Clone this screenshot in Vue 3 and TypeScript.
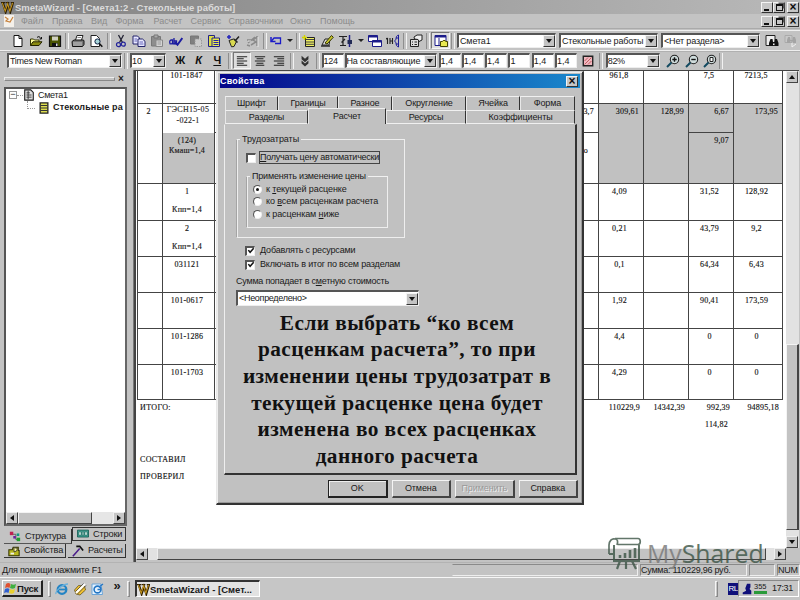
<script setup lang="ts">
interface Tool { icon?: string; w: number; kind?: 'sep' | 'caret' | 'pressed' }
interface Cell { t?: string }

const menu = [
  ['Файл', 31], ['Правка', 39], ['Вид', 24.5], ['Форма', 38], ['Расчет', 37], ['Сервис', 38], ['Справочники', 61.5], ['Окно', 30], ['Помощь', 40],
] as [string, number][]

const tools: Tool[] = [
  { icon: 'new', w: 18.5 }, { icon: 'open', w: 18.5 }, { icon: 'save', w: 18.5 }, { w: 5, kind: 'sep' },
  { icon: 'print', w: 18 }, { icon: 'preview', w: 18 }, { w: 7, kind: 'sep' },
  { icon: 'cut', w: 18 }, { icon: 'copy', w: 18 }, { icon: 'paste', w: 18 }, { icon: 'spell', w: 20 },
  { icon: 'pastegray', w: 19 }, { icon: 'fields', w: 18 }, { icon: 'brush', w: 19 }, { icon: 'branch', w: 20 },
  { w: 5, kind: 'sep' }, { icon: 'undo', w: 17 }, { w: 11, kind: 'caret' }, { w: 5, kind: 'sep' },
  { icon: 'list', w: 18 }, { icon: 'pencil', w: 18 }, { icon: 'compass', w: 19 }, { w: 11, kind: 'caret' },
  { icon: 'windows', w: 18 }, { icon: 'split', w: 18 }, { w: 5, kind: 'sep' }, { icon: 'hand', w: 18 },
  { w: 6, kind: 'sep' }, { icon: 'tree', w: 19, kind: 'pressed' }, { w: 5, kind: 'sep' },
]
const coefs = ['1,4', '1,4', '1,4', '1', '1,4', '1,4']

const rows: Cell[][] = [
  [{}, { t: '101-1847' }, {}, { t: '961,8' }, {}, { t: '7,5' }, { t: '7213,5' }],
]
const bodyRows: string[][] = [
  ['1', 'Кпп=1,4', '4,09', '31,52', '128,92'],
  ['2', 'Кпп=1,4', '0,21', '43,79', '9,2'],
  ['031121', '', '0,1', '64,34', '6,43'],
  ['101-0617', '', '1,92', '90,41', '173,59'],
  ['101-1286', '', '4,4', '0', '0'],
  ['101-1703', '', '4,29', '0', '0'],
]
const tabsTop: [string, number][] = [['Шрифт', 53], ['Границы', 60], ['Разное', 54], ['Округление', 74], ['Ячейка', 54], ['Форма', 55]]
const tabsLow: [string, number][] = [['Разделы', 83], ['Расчет', 78], ['Ресурсы', 80], ['Коэффициенты', 109]]
const radios: [string, string, string][] = [['к ', 'т', 'екущей расценке'], ['ко ', 'в', 'сем расценкам расчета'], ['к расценкам ', 'н', 'иже']]
const note = ['Если выбрать “ко всем', 'расценкам расчета”, то при', 'изменении цены трудозатрат в', 'текущей расценке цена будет', 'изменена во всех расценках', 'данного расчета']
</script>

<template>
  <div class="screen">
    <svg class="defs" width="0" height="0">
      <symbol id="i-new" viewBox="0 0 14 14"><path d="M3 1.5h5l3 3v8H3z" fill="#fff" stroke="#111" /><path d="M8 1.5v3h3" fill="none" stroke="#111" /></symbol>
      <symbol id="i-open" viewBox="0 0 14 14"><path d="M1.5 11.5V5h3l1 1H10v2" fill="#ffff9c" stroke="#333300" /><path d="M1.5 11.5L4 7.8h9L10 11.5z" fill="#8a8a10" stroke="#222200" /><path d="M8 3.5c1.500-1.500 3-1 3.500 1M12.500 3v2h-2" fill="none" stroke="#111" /></symbol>
      <symbol id="i-save" viewBox="0 0 14 14"><path d="M1.500 2h11v10.500h-11z" fill="#4a5400" stroke="#111" stroke-width="1.200" /><path d="M4 2.500h6v4H4z" fill="#d0d0c0" /><path d="M4 9h6v3H4z" fill="#111" /><path d="M8 9.500h1.500V12H8z" fill="#ddd" /></symbol>
      <symbol id="i-print" viewBox="0 0 14 14"><path d="M4.500 6L6 1.500h6L10.500 6" fill="#fff" stroke="#222" /><path d="M6.500 3.500h3.500" stroke="#555" stroke-width=".7" /><path d="M1 7.500L3 6h9.500L13 7v3.500L11.500 12.500H1.500z" fill="#777" stroke="#111" /><path d="M2 9h9M2 11h9" stroke="#ddd" stroke-width=".8" /></symbol>
      <symbol id="i-preview" viewBox="0 0 14 14"><path d="M2 1.500h5.500l3 3v8H2z" fill="#fff" stroke="#222" /><circle cx="8.500" cy="7.500" r="2.600" fill="#a7d4d8" stroke="#124" /><path d="M10.300 9.500L13.300 12.800" stroke="#111" stroke-width="1.600" /></symbol>
      <symbol id="i-cut" viewBox="0 0 14 14"><path d="M4.500 1L8.500 8.500M9.500 1L5.500 8.500" stroke="#223" stroke-width="1.300" /><circle cx="4.500" cy="10.700" r="2" fill="none" stroke="#22229a" stroke-width="1.200" /><circle cx="9.300" cy="10.200" r="2" fill="none" stroke="#22229a" stroke-width="1.200" /></symbol>
      <symbol id="i-copy" viewBox="0 0 14 14"><path d="M1 2h4.500L7.500 4v6H1z" fill="#e8e8ff" stroke="#22226a" /><path d="M6 5h4.500L13 7.300v5.200H6z" fill="#e8e8ff" stroke="#22226a" /><path d="M7.500 8h3.500M7.500 10h4M2.500 5h2.500M2.500 7h2.500" stroke="#44a" stroke-width=".8" /></symbol>
      <symbol id="i-paste" viewBox="0 0 14 14"><path d="M1.500 2.500h9v9.500h-9z" fill="#8d8d8d" stroke="#777" /><path d="M4 1h4v3H4z" fill="#aaa" stroke="#777" /><path d="M6 6h6.500v6.500H6z" fill="#d4d4d4" stroke="#888" /><path d="M7.500 8h3.500M7.500 10h3.500" stroke="#888" stroke-width=".8" /></symbol>
      <symbol id="i-spell" viewBox="0 0 14 14"><path d="M.8 9.500V7l1.200-1h1.500v4M5 4v5.500h2.500V7H5" fill="none" stroke="#1c1ca0" stroke-width="1.300" /><path d="M6 8l2.500 2.800L13.300 4" fill="none" stroke="#1c1ca0" stroke-width="1.900" /><path d="M.5 9.800h7" stroke="#1c1ca0" stroke-width="1.300" /></symbol>
      <symbol id="i-pastegray" viewBox="0 0 14 14"><path d="M1.500 2h8v8h-8z" fill="#808080" stroke="#777" /><path d="M6 5h6.500v7.500H6z" fill="#ccc" stroke="#999" stroke-dasharray="1.500 1" /></symbol>
      <symbol id="i-fields" viewBox="0 0 14 14"><path d="M1.500 1.500h6v11h-6z" fill="#e0e040" stroke="#22228a" /><path d="M5 4h7.500v8.500H5z" fill="#e8e850" stroke="#22228a" /><path d="M6.500 6.500h5M6.500 8.500h5M6.500 10.500h5" stroke="#22a" /></symbol>
      <symbol id="i-brush" viewBox="0 0 14 14"><path d="M3 1v4M1 3h4" stroke="#22b" stroke-width="1.500" /><path d="M3 6.500l4.500-1.500 3 2.500-2.500 5-2.500.3z" fill="#d8d850" stroke="#222" /><path d="M9 7l4-4.500M8 5l3.500 3.500" stroke="#222" stroke-width="1.500" /></symbol>
      <symbol id="i-branch" viewBox="0 0 14 14"><path d="M12 2v10M12 3L8 6l3 2-5 3M2 6h6M3 9l7-6M2 11l3 1" fill="none" stroke="#8a8a8a" stroke-width="1.500" /><path d="M13 3v10M3 7h3" stroke="#f0f0f0" stroke-width=".8" /></symbol>
      <symbol id="i-undo" viewBox="0 0 14 14"><path d="M2 3v4.500h4.500" fill="none" stroke="#1a1ac8" stroke-width="1.500" /><path d="M2.500 7L5 4h6.500v5.500H6" fill="none" stroke="#1a1ac8" stroke-width="1.300" /></symbol>
      <symbol id="i-list" viewBox="0 0 14 14"><path d="M3.500 3.500h9v9h-9z" fill="#f0f060" stroke="#222" /><path d="M4 5.500h8M4 8h8M4 10.300h8" stroke="#444" /><path d="M2.500 1v5M0 3.500h5" stroke="#d6d600" stroke-width="1.400" /></symbol>
      <symbol id="i-pencil" viewBox="0 0 14 14"><path d="M2 11L5 5h5l-1 6z" fill="#ddd" stroke="#222" /><path d="M5 9L11.500 1.500l1.800 1.800L7 10z" fill="#c9c930" stroke="#333300" /><path d="M1 12h9" stroke="#222" stroke-width="1.400" /></symbol>
      <symbol id="i-compass" viewBox="0 0 14 14"><path d="M0 2.500h8M1 11.500h6M4 3v8M2.500 8.500L6 5" stroke="#222" stroke-width="1.200" /><path d="M10.500 1v12" stroke="#22228a" stroke-width="1.500" /><path d="M8.500 6h4.500v4H8.500z" fill="#222a55" /></symbol>
      <symbol id="i-windows" viewBox="0 0 14 14"><path d="M.5 1.500h9v6h-9z" fill="#fff" stroke="#1c1c8a" /><path d="M.5 2.500h9" stroke="#1c1c8a" stroke-width="2" /><path d="M4.500 6.500h9v6h-9z" fill="#fff" stroke="#1c1c8a" /><path d="M4.500 7.500h9" stroke="#1c1c8a" stroke-width="2" /></symbol>
      <symbol id="i-split" viewBox="0 0 14 14"><path d="M1.500 4v6M0 5l1.500-1M4 4v6M6.500 4v6M4 7h2.500" stroke="#222" stroke-width="1.100" fill="none" /><path d="M12.500 1C9 2 11 6 8.500 7 11 8 9 12 12.500 13M12.500 1v12M10 4h3M10 10h3" fill="none" stroke="#1c1c9a" stroke-width="1" /></symbol>
      <symbol id="i-hand" viewBox="0 0 14 14"><path d="M1.500 5.500h8v7h-8z" fill="#ddd" stroke="#222" /><path d="M3 8h1M5.500 8H8M3 10.500h1M5.500 10.500H8" stroke="#222" /><path d="M5 3L8 1h5v5l-3 1.500L9 5.500 5.500 5z" fill="#eee" stroke="#222" /></symbol>
      <symbol id="i-tree" viewBox="0 0 14 14"><path d="M1 1.500h11v10H1z" fill="#fff" stroke="#1c1c8a" /><path d="M1 2.500h11" stroke="#1c1c8a" stroke-width="2" /><path d="M5 4v7.500" stroke="#1c1c8a" /><path d="M6.500 7.500h2l.7-1h2l.5 1h1.800v5H6.500z" fill="#e8e850" stroke="#444400" /></symbol>
      <symbol id="i-find" viewBox="0 0 14 14"><path d="M1 1.500h9v10H1z" fill="#eee" stroke="#222" /><path d="M4 12V9l1.500-4h2L8 8h1.500L10 5h2l1.500 4v3h-3.500v-2.500h-2V12z" fill="#111" /></symbol>
      <symbol id="i-findgray" viewBox="0 0 14 14"><path d="M1 1.500h7v7H1z" fill="#c8c8c8" stroke="#aaa" /><path d="M3 9V6l1-3h2l.5 3h2L9 3h2l1 3v3H9V7.500H6V9z" fill="#a4a4a4" /><path d="M8 9v4l4-3" fill="none" stroke="#f0f0f0" /></symbol>
      <symbol id="i-left" viewBox="0 0 14 14"><path d="M1 2h12M1 4.500h8M1 7h12M1 9.500h8M1 12h12" stroke="#222" stroke-width="1.200" /></symbol>
      <symbol id="i-center" viewBox="0 0 14 14"><path d="M1 2h12M3 4.500h8M1 7h12M3 9.500h8M2 12h10" stroke="#222" stroke-width="1.200" /></symbol>
      <symbol id="i-right" viewBox="0 0 14 14"><path d="M1 2h12M5 4.500h8M1 7h12M5 9.500h8M1 12h12" stroke="#222" stroke-width="1.200" /></symbol>
      <symbol id="i-chev" viewBox="0 0 14 14"><path d="M3 1l4 3.500L11 1v4L7 8.500 3 5zM3 6.500L7 10l4-3.500V10l-4 3.500L3 10z" fill="#333" /></symbol>
      <symbol id="i-box" viewBox="0 0 14 14"><path d="M1.500 1.500h11v11h-11z" fill="#f0b8c0" stroke="#222" stroke-width="1.600" /><path d="M3 11l8-8M3 7l4-4M7 11l4-4" stroke="#a33" stroke-width=".8" /></symbol>
      <symbol id="i-zin" viewBox="0 0 14 14"><circle cx="8.500" cy="5.500" r="4.200" fill="#cfdcdc" stroke="#222" stroke-width="1.100" /><path d="M5.500 8.500L1 13" stroke="#124a60" stroke-width="2" /><path d="M6.300 5.500h4.400M8.500 3.300v4.400" stroke="#111" stroke-width="1.400" /></symbol>
      <symbol id="i-zout" viewBox="0 0 14 14"><circle cx="8.500" cy="5.500" r="4.200" fill="#cfdcdc" stroke="#222" stroke-width="1.100" /><path d="M5.500 8.500L1 13" stroke="#124a60" stroke-width="2" /><path d="M6.300 5.500h4.400" stroke="#111" stroke-width="1.400" /></symbol>
      <symbol id="i-zpage" viewBox="0 0 14 14"><circle cx="8.500" cy="5.500" r="4.200" fill="#cfdcdc" stroke="#222" stroke-width="1.100" /><path d="M5.500 8.500L1 13" stroke="#124a60" stroke-width="2" /><path d="M7 3.500h3v4H7z" fill="#fff" stroke="#222" /></symbol>
      <symbol id="i-w" viewBox="0 0 14 14"><path d="M0 1.800h4.500M5 1.800h4M10.500 1.800H14" stroke="#332200" stroke-width="1.200" /><path d="M2 2L5 11.500 7.500 4 10 11.500 12.800 2" fill="none" stroke="#2a1c00" stroke-width="2.400" /><path d="M1.500 2L4.500 11 7.200 3 9.500 11 12.500 2" fill="none" stroke="#c9981c" stroke-width="1.100" /></symbol>
      <symbol id="i-doc" viewBox="0 0 14 14"><path d="M2 1h7l3 3v9H2z" fill="#ddd" stroke="#222" stroke-width="1.300" /><path d="M4 4.500h4M4 7h6M4 9.500h6M6 2v10" stroke="#333" /></symbol>
      <symbol id="i-rows" viewBox="0 0 14 14"><path d="M2.500 1h9v12h-9z" fill="#dede50" stroke="#222" stroke-width="1.500" /><path d="M3 4h8M3 7h8M3 10h8" stroke="#333" stroke-width="1.200" /></symbol>
      <symbol id="i-struct" viewBox="0 0 14 14"><path d="M4 5h4v6h2" fill="none" stroke="#555" /><path d="M1 2h4v4H1z" fill="#c02050" /><path d="M9 4h3v3H9z" fill="#109a80" /><path d="M9 9h4v4H9z" fill="#20a030" /><path d="M5 7h3v3H5z" fill="#6a20a0" /></symbol>
      <symbol id="i-lines" viewBox="0 0 14 14"><path d="M.5 2.500h13v8H.5z" fill="#40a898" stroke="#105850" /><path d="M2 4.500h3v4H2zM6 4.500h2v4H6zM9 4.500h3v4H9z" fill="#c8e8e0" stroke="#105850" stroke-width=".7" /></symbol>
      <symbol id="i-props" viewBox="0 0 14 14"><path d="M1 5.500h4l1-3h6v4h1v6H1z" fill="#b8b820" stroke="#333300" stroke-width="1.200" /><path d="M7 3l4 1-1 3-3 1z" fill="#ffffa0" stroke="#333" /><path d="M3 9h4v2H3z" fill="#eee" /></symbol>
      <symbol id="i-hammer" viewBox="0 0 14 14"><path d="M1 13L9 4" stroke="#4a1a8a" stroke-width="1.800" /><path d="M5 1.500h4l4 5" fill="none" stroke="#111" stroke-width="2" /></symbol>
      <symbol id="i-flag" viewBox="0 0 14 14"><path d="M3 3c2-1.500 3-1 4.500 0L6.500 7C5 6 4 6 2 7z" fill="#e05030" /><path d="M8 3c2 1 3 1 5 0l-1 4c-2 1-3 1-5 0z" fill="#40b040" /><path d="M2 8c2-1 3-1 4.500 0l-1 4C4 11 3 11 1 12z" fill="#3060d0" /><path d="M7 8c2 1 3 1 5 0l-1 4c-2 1-3 1-5 0z" fill="#e8d030" /></symbol>
      <symbol id="i-ie" viewBox="0 0 14 14"><circle cx="7" cy="7.500" r="4.300" fill="none" stroke="#2484c4" stroke-width="2.300" /><path d="M4 7.500h7" stroke="#2484c4" stroke-width="1.800" /><path d="M1 12C0 9 8 2 13 2" fill="none" stroke="#68b0dc" stroke-width="1.300" /></symbol>
      <symbol id="i-desk" viewBox="0 0 14 14"><path d="M1.500 8l4-4.500 6 .5 1 4-5.500 5-4-1z" fill="#f0c030" stroke="#665520" stroke-width=".8" /><path d="M3 11L12 2" stroke="#fff" stroke-width="2" /><path d="M2.500 9.500L10.500 1.500M4.500 12L13 3.500" stroke="#444" stroke-width=".8" /></symbol>
      <symbol id="i-mail" viewBox="0 0 14 14"><path d="M2 2h9l1.500 10.500H2z" fill="#e8f4ff" stroke="#6aa4d8" /><circle cx="7.500" cy="7.500" r="3.400" fill="none" stroke="#2476c4" stroke-width="1.600" /><path d="M7.500 7.500h3M9 5l4-3" stroke="#2476c4" stroke-width="1.300" /></symbol>
    </svg>

    <header class="title">
      <svg class="ic"><use href="#i-w" /></svg>
      <span class="title-text">SmetaWizard - [Смета1:2 - Стекольные работы]</span>
      <span class="wbtns"><i class="wb min"></i><i class="wb rest"></i><i class="wb cls">×</i></span>
    </header>
    <nav class="menu">
      <span class="mdi"><svg viewBox="0 0 12 12"><path d="M1 0h10v12H1z" fill="#f4f0ea" /><path d="M2 2l3 2-2 2 4 1 3-5" fill="none" stroke="#c8823c" stroke-width="1.200" /></svg></span>
      <span v-for="m in menu" :key="m[0]" class="mi" :style="{ width: m[1] + 'px' }">{{ m[0] }}</span>
      <span class="wbtns"><i class="wb min"></i><i class="wb rest"></i><i class="wb cls">×</i></span>
    </nav>

    <div class="bar bar1">
      <span v-for="(t, i) in tools" :key="i" class="tool" :class="t.kind" :style="{ width: t.w + 'px' }">
        <svg v-if="t.icon" class="ic"><use :href="'#i-' + t.icon" /></svg>
      </span>
      <span class="combo c99 first"><b>Смета1</b><i class="dd"></i></span>
      <span class="combo c99"><b>Стекольные работы</b><i class="dd"></i></span>
      <span class="combo c99"><b>&lt;Нет раздела&gt;</b><i class="dd"></i></span>
      <span class="tool t18"><svg class="ic"><use href="#i-find" /></svg></span>
      <span class="tool t18"><svg class="ic"><use href="#i-findgray" /></svg></span>
    </div>

    <div class="bar bar2">
      <span class="combo tnr"><b>Times New Roman</b><i class="dd"></i></span>
      <span class="tool sep s8"></span>
      <span class="combo size"><b>10</b><i class="dd"></i></span>
      <span class="fmt bold">Ж</span><span class="fmt ital">К</span><span class="fmt und">Ч</span>
      <span class="tool sep s6"></span>
      <span class="tool pressed t18"><svg class="ic s"><use href="#i-left" /></svg></span>
      <span class="tool t18"><svg class="ic s"><use href="#i-center" /></svg></span>
      <span class="tool t18"><svg class="ic s"><use href="#i-right" /></svg></span>
      <span class="tool sep s10"></span>
      <span class="tool t18"><svg class="ic s"><use href="#i-chev" /></svg></span>
      <span class="tool sep s7"></span>
      <span class="field f22">124</span>
      <span class="combo comp"><b>На составляющие</b><i class="dd"></i></span>
      <span v-for="(c, i) in coefs" :key="i" class="field">{{ c }}</span>
      <span class="tool t18"><svg class="ic s"><use href="#i-box" /></svg></span>
      <span class="tool sep s8"></span>
      <span class="combo zoom"><b>82%</b><i class="dd"></i></span>
      <span class="tool t18 zfirst"><svg class="ic"><use href="#i-zin" /></svg></span>
      <span class="tool t18"><svg class="ic"><use href="#i-zout" /></svg></span>
      <span class="tool t18"><svg class="ic"><use href="#i-zpage" /></svg></span>
      <span class="tool sep s4"></span>
    </div>

    <main class="work">
      <aside class="dock">
        <div class="grip"><i></i><b>×</b></div>
        <div class="tree">
          <div class="node"><i class="box">−</i><i class="dots"></i><svg class="ic s"><use href="#i-doc" /></svg><span class="root">Смета1</span></div>
          <div class="node child"><i class="elbow"></i><svg class="ic s"><use href="#i-rows" /></svg><span class="bold">Стекольные ра</span></div>
          <div class="tree-scroll"><i class="sb l"></i><i class="thumb"></i><i class="sb r"></i></div>
        </div>
        <div class="dtabs">
          <span class="dt on"><svg class="ic s"><use href="#i-struct" /></svg>Структура</span>
          <span class="dt up"><svg class="ic s"><use href="#i-lines" /></svg>Строки</span>
          <span class="dt"><svg class="ic s"><use href="#i-props" /></svg>Свойства</span>
          <span class="dt"><svg class="ic s"><use href="#i-hammer" /></svg>Расчеты</span>
        </div>
      </aside>

      <section class="doc">
        <div class="sheet">
          <div class="grid">
            <template v-for="(r, ri) in rows" :key="'a' + ri">
              <div v-for="(c, ci) in r" :key="ci" class="c top">{{ c.t }}</div>
            </template>
            <div class="c span num2">2</div>
            <div class="c code nob">ГЭСН15-05<br />-022-1</div>
            <div class="c hid">3,7</div>
            <div class="c g span rt">309,61</div>
            <div class="c g span rt">128,99</div>
            <div class="c g rt">6,67</div>
            <div class="c g span rt">173,95</div>
            <div class="c g km">(124)<br />Кмаш=1,4</div>
            <div class="c hid mid">о</div>
            <div class="c g rt">9,07</div>
            <template v-for="(r, ri) in bodyRows" :key="'b' + ri">
              <div class="c"></div>
              <div class="c">{{ r[0] }}<span v-if="r[1]" class="kpp">{{ r[1] }}</span></div>
              <div class="c"></div>
              <div class="c">{{ r[2] }}</div>
              <div class="c"></div>
              <div class="c">{{ r[3] }}</div>
              <div class="c">{{ r[4] }}</div>
            </template>
          </div>
          <div class="totals"><span class="it">ИТОГО:</span><span>110229,9</span><span>14342,39</span><span>992,39</span><span class="last">94895,18</span></div>
          <div class="sub">114,82</div>
          <div class="sign">СОСТАВИЛ</div>
          <div class="sign second">ПРОВЕРИЛ</div>
        </div>
        <div class="vscroll"><i class="sb u"></i><i class="vthumb"></i><i class="sb d"></i></div>
        <div class="hscroll"><i class="sb l"></i><i class="hthumb"></i><i class="sb r"></i></div>
      </section>
    </main>

    <footer class="status">
      <span class="help">Для помощи нажмите F1</span>
      <span class="pane empty0"></span>
      <span class="pane sum">Сумма: 110229,96 руб.</span>
      <span class="pane empty"></span>
      <span class="pane num">NUM</span>
    </footer>

    <div class="taskbar">
      <span class="start"><svg class="ic"><use href="#i-flag" /></svg>Пуск</span>
      <i class="tsep"></i>
      <svg class="ic q"><use href="#i-ie" /></svg><svg class="ic q"><use href="#i-desk" /></svg><svg class="ic q"><use href="#i-mail" /></svg>
      <span class="more">»</span>
      <i class="tsep"></i>
      <span class="task"><svg class="ic"><use href="#i-w" /></svg><span>SmetaWizard - [Смет...</span></span>
      <i class="tsep far"></i>
      <span class="lang">RL</span>
      <span class="tray">
        <svg class="ic s" viewBox="0 0 14 14"><path d="M7 1h4v4l-1 2 2 2v4H2v-2l4-2-1-3z" fill="#10107a" /></svg>
        <span class="cnt">355</span><span class="clock">17:31</span>
      </span>
    </div>

    <div class="dialog">
      <div class="dtitle"><span>Свойства</span><i class="wb cls">×</i></div>
      <div class="tabs t1"><span v-for="t in tabsTop" :key="t[0]" :style="{ width: t[1] + 'px' }">{{ t[0] }}</span></div>
      <div class="tabs t2"><span v-for="(t, i) in tabsLow" :key="t[0]" :class="{ sel: i === 1 }" :style="{ width: t[1] + 'px' }">{{ t[0] }}</span></div>
      <div class="panel">
        <fieldset class="group g1">
          <legend>Трудозатраты</legend>
          <div class="check"><i class="cb"></i><span class="focus"><u>П</u>олучать цену автоматически</span></div>
          <fieldset class="group g2">
            <legend>Применять изменение цены</legend>
            <div v-for="(r, i) in radios" :key="i" class="radio"><i class="rb" :class="{ on: i === 0 }"></i><span>{{ r[0] }}<u>{{ r[1] }}</u>{{ r[2] }}</span></div>
          </fieldset>
        </fieldset>
        <div class="check k1"><i class="cb"><svg viewBox="0 0 9 9"><path d="M1.500 3.500l2 2.500L7.500 1.500" fill="none" stroke="#111" stroke-width="1.700" /></svg></i><span>Добавлять с ресурсами</span></div>
        <div class="check k2"><i class="cb"><svg viewBox="0 0 9 9"><path d="M1.500 3.500l2 2.500L7.500 1.500" fill="none" stroke="#111" stroke-width="1.700" /></svg></i><span>Включать в итог по всем разделам</span></div>
        <div class="sumlbl">Сумма попадает в с<u>м</u>етную стоимость</div>
        <span class="combo undef"><b>&lt;Неопределено&gt;</b><i class="dd"></i></span>
        <div class="note"><div v-for="(n, i) in note" :key="i">{{ n }}</div></div>
      </div>
      <div class="btns"><span class="btn def">OK</span><span class="btn">Отмена</span><span class="btn dis">Применить</span><span class="btn">Справка</span></div>
    </div>

    <div class="mark">
      <svg viewBox="0 0 36 34" width="36" height="34"><g fill="none" stroke="#3c5446" stroke-width="1.700"><path d="M2 17V8c0-4 3-7 6-6 3 0 3 3 2 6M8 1.500h23c3 0 3 6 0 6H11" /><path d="M7 8v16h25V8M2 17h4" stroke-width="2" /><path d="M13 24l-3 8M19 24v8M25 24l4 8" stroke-width="2.200" /><path d="M13 21v-3M18 21v-5M23 21v-8M28 21V11" stroke-width="2.600" /></g></svg>
      <span class="my">My</span><span class="sh">Shared</span>
    </div>
  </div>
</template>

<style>
body { background: #c3c3c3; overflow: hidden; }
</style>
<style scoped>
* { box-sizing: border-box; }
.screen { position: relative; width: 800px; height: 600px; overflow: hidden; background: #c3c3c3; color: #1a1a1a; font: 9px/11px "Liberation Sans", Arial, sans-serif; display: flex; flex-direction: column; white-space: nowrap; }
.defs { position: absolute; }
i { font-style: normal; }
.ic { width: 14px; height: 14px; flex: none; display: block; }
.ic.s { width: 12px; height: 12px; }
.bold { font-weight: bold; }

.title { height: 14px; flex: none; display: flex; align-items: center; padding: 0 0 0 1px; background: linear-gradient(90deg, #828282, #b6b6b6 95%); }
.title-text { margin-left: 1px; font-weight: bold; font-size: 9.500px; color: #dcdcdc; letter-spacing: -.03px; }
.title .ic { width: 13px; height: 13px; }
.wbtns { margin-left: auto; display: flex; padding-right: 1px; }
.wb { width: 12px; height: 11px; background: #c6c6c6; border: 1px solid; border-color: #f4f4f4 #333 #333 #f4f4f4; display: flex; align-items: center; justify-content: center; }
.wb.cls { margin-left: 2px; font: bold 12px/8px "Liberation Sans", sans-serif; color: #111; }
.wb.min::before { content: ''; width: 5px; height: 2px; background: #111; margin: 5px 2px 0 0; }
.wb.rest::before { content: ''; width: 5px; height: 4px; border: 1px solid #111; border-top-width: 2px; box-shadow: 2px -2px 0 -0.500px #555; }
.menu { height: 15px; flex: none; display: flex; align-items: center; color: #8b8b8b; border-bottom: 1px solid #aaa; letter-spacing: 0; }
.mdi { width: 21px; padding-left: 3px; } .mdi svg { width: 12px; height: 12px; display: block; }

.bar { display: flex; align-items: center; flex: none; border-top: 1px solid #f0f0f0; }
.bar1 { height: 20px; margin-top: 1px; padding-left: 8.500px; border-left: 0; }
.bar2 { height: 20px; padding-left: 7px; border-top-color: #eee; box-shadow: inset 0 1px #b0b0b0; }
.tool { display: flex; height: 17px; align-items: center; justify-content: center; flex: none; }
.t18 { width: 18.500px; }
.sep::before { content: ''; height: 16px; width: 2px; border-left: 1px solid #8e8e8e; border-right: 1px solid #f2f2f2; }
.s4 { width: 4px; } .s6 { width: 6px; } .s7 { width: 7px; } .s8 { width: 8px; } .s10 { width: 8px; }
.caret::before { content: ''; border: 3px solid transparent; border-top-color: #222; border-bottom: 0; }
.pressed { background: #dedede; border: 1px solid; border-color: #777 #f6f6f6 #f6f6f6 #777; }
.combo { display: flex; height: 15px; background: #fff; border: 1px solid; border-color: #555 #eee #eee #555; border-top-width: 2px; border-left-width: 2px; flex: none; align-items: center; overflow: hidden; }
.combo b { font-weight: normal; font-size: 9px; flex: 1; padding-left: 1px; letter-spacing: -.15px; }
.dd { width: 12px; height: 12px; background: #c3c3c3; border: 1px solid; border-color: #f4f4f4 #333 #333 #f4f4f4; display: flex; align-items: center; justify-content: center; flex: none; }
.dd::before { content: ''; border: 3px solid transparent; border-top: 4px solid #111; border-bottom: 0; }
.c99 { width: 99px; margin-right: 3px; }
.c99.first { margin-left: 2px; }
.tnr { width: 115px; }
.tnr b { letter-spacing: -.3px; padding-left: 1px; }
.size { width: 36px; margin-right: 5px; }
.size b { padding-left: 0; letter-spacing: 0; }
.comp { width: 92px; margin-right: 2px; }
.comp b { padding-left: 0; letter-spacing: -.15px; }
.zoom { width: 54px; margin-left: 1px; }
.zoom b { padding-left: 0; letter-spacing: -.4px; }
.zfirst { margin-left: 4px; }
.fmt { width: 18.500px; text-align: center; font-size: 11px; font-weight: bold; color: #111; }
.ital { font-style: italic; } .und { text-decoration: underline; }
.field { width: 22px; height: 15px; margin-right: 1.300px; background: #fff; border: 1px solid #eee; border-top: 2px solid #555; border-left: 2px solid #555; line-height: 12px; flex: none; }
.f22 { margin-right: 1px; letter-spacing: -.2px; }

.work { height: 492px; flex: none; display: flex; }
.dock { width: 134px; padding: 0 6px 0 4px; border-right: 1px solid #777; display: flex; flex-direction: column; }
.grip { height: 17px; display: flex; align-items: center; padding-top: 1px; flex: none; }
.grip i { height: 4px; flex: 1; border: 1px solid #eee; border-bottom-color: #888; border-right-color: #888; }
.grip b { width: 12px; text-align: center; font-size: 10px; line-height: 10px; }
.tree { height: 439px; flex: none; background: #fff; border: 2px solid #555; border-right-color: #666; border-bottom: 2px solid #666; display: flex; flex-direction: column; overflow: hidden; }
.node { display: flex; height: 12.500px; align-items: center; padding-left: 2px; }
.node span { margin-left: 3px; }
.root { letter-spacing: -.3px; }
.child { padding-left: 21px; } .child span { font-size: 9px; letter-spacing: .15px; }
.box { width: 8px; height: 8px; border: 1px solid #999; line-height: 5px; text-align: center; margin-left: 1px; }
.dots { width: 6px; border-top: 1px dotted #999; }
.elbow { width: 8px; height: 8px; border: 1px dotted #999; border-top: 0; border-right: 0; margin: -6px 3px 0 0; }
.tree-scroll { margin-top: auto; height: 12px; background: #e6e6e6; display: flex; }
.sb { width: 12px; height: 12px; background: #c6c6c6; border: 1px solid; border-color: #f0f0f0 #444 #444 #f0f0f0; flex: none; display: flex; align-items: center; justify-content: center; }
.sb::before { content: ''; border: 3px solid transparent; }
.sb.l::before { border-right: 4px solid #111; border-left: 0; }
.sb.r::before { border-left: 4px solid #111; border-right: 0; }
.sb.u::before { border-bottom: 4px solid #111; border-top: 0; }
.sb.d::before { border-top: 4px solid #111; border-bottom: 0; }
.thumb { width: 74px; background: #c3c3c3; border: 1px solid; border-color: #f4f4f4 #444 #444 #f4f4f4; }
.tree-scroll .r { margin-left: auto; }
.dtabs { display: flex; flex-wrap: wrap; padding-top: 3px; width: 122px; }
.dt { display: flex; align-items: center; height: 14px; width: 62px; gap: 4px; padding-left: 4px; border-right: 1px solid #333; border-bottom: 1px solid #333; font-size: 9.200px; letter-spacing: -.15px; }
.dt.on { width: 68px; padding-left: 5px; height: 15px; border-bottom-color: #555; letter-spacing: -.3px; }
.dt.up { width: 54px; height: 14px; border-top: 1px solid #333; border-left: 1px solid #333; margin-top: -2px; }
.dt:nth-child(4) { width: 58px; margin-left: 2px; }

.doc { width: 665px; display: grid; grid-template-columns: 650px 13px; grid-template-rows: 477px 12px; border-left: 2px solid #444; border-top: 1px solid #444; }
.sheet { background: #fff; overflow: hidden; padding-left: 1px; font: 8px/10px "Liberation Serif", "Times New Roman", serif; letter-spacing: .2px; color: #111; -webkit-text-stroke: .15px #222; }
.grid { display: grid; grid-template-columns: 25px 52px 384px 45px 45px 45px 49px; grid-template-rows: 33px 28.500px 51.500px 36.500px 36px 36px 36px 36px 35.500px; width: 646px; border-left: 1px solid #444; }
.c { border-right: 1px solid #444; border-bottom: 1px solid #444; text-align: center; padding: 3px 3px 0 0; }
.c.top { padding-top: 0; line-height: 9px; padding-right: 4px; }
.c.span { grid-row: span 2; }
.c.nob { border-bottom: 0; }
.c.code { line-height: 11px; padding: 0 1px 0 0; letter-spacing: .3px; color: #333; }
.c.g { background: #c1c1c1; }
.c.rt { text-align: right; padding-right: 4px; }
.c.km { line-height: 10px; }
.c.hid { text-align: right; padding-right: 4px; padding-top: 3px; font-size: 8px; }
.c.hid.mid { padding-right: 10px; padding-top: 13px; }
.num2 { padding-top: 3px; }
.kpp { display: block; margin-top: 8px; }
.totals { display: flex; padding-top: 2.500px; }
.totals span { text-align: right; width: 45px; }
.totals .it { width: 458px; text-align: left; padding-left: 3px; letter-spacing: .35px; }
.totals .last { width: 49px; }
.sub { padding: 7px 0 0 568px; }
.sign { padding: 25px 0 0 3px; letter-spacing: .3px; }
.sign.second { padding-top: 7px; }
.vscroll { background: #e2e2e2; display: flex; flex-direction: column; }
.vthumb { margin-top: 261px; height: 186px; background: #c3c3c3; border: 1px solid; border-color: #f4f4f4 #444 #444 #f4f4f4; border-right-width: 2px; }
.vscroll .d { margin-top: auto; }
.hscroll { background: #e2e2e2; display: flex; }
.hthumb { width: 609px; margin-left: 9px; background: #c3c3c3; border: 1px solid; border-color: #eee #444 #444 #eee; }
.hscroll .r { margin-left: auto; }

.status { height: 15px; flex: none; display: flex; align-items: center; padding-left: 2px; gap: 2px; border-top: 1px solid #b3b3b3; }
.help { font-size: 9px; width: 448px; letter-spacing: -.2px; }
.pane { height: 12px; line-height: 11px; border: 1px solid; border-color: #8a8a8a #eee #eee #8a8a8a; }
.empty0 { width: 186px; border-left-color: transparent; } .sum { width: 107px; letter-spacing: -.25px; } .empty { width: 26px; } .num { width: 23px; font-size: 9px; letter-spacing: -.2px; }
.taskbar { flex: 1; display: flex; align-items: center; padding: 0 1px 1px 2px; border-top: 1px solid #f6f6f6; background: #c6c6c6; }
.start { width: 41px; height: 17px; display: flex; align-items: center; border: 1px solid; border-color: #fff #222 #222 #fff; border-right-width: 2px; border-bottom-width: 2px; font-weight: bold; font-size: 9.500px; letter-spacing: -.2px; }
.tsep { width: 3px; height: 16px; margin: 0 5px; border: 1px solid; border-color: #f4f4f4 #888 #888 #f4f4f4; flex: none; }
.start + .tsep { margin-right: 4px; }
.q { margin-right: 3.500px; }
.more { font-size: 13px; font-weight: bold; margin: -7px 0 0 6px; width: 8.500px; }
.task { width: 125px; height: 17px; background: #e2e2e2; border: 1px solid; border-color: #333 #fff #fff #333; border-top-width: 2px; border-left-width: 2px; display: flex; align-items: center; font-weight: bold; font-size: 9.500px; letter-spacing: 0; }
.task .ic { width: 13px; height: 13px; }
.far { margin-left: auto; }
.lang { background: #10107a; color: #fff; width: 10px; height: 12px; font-size: 8px; line-height: 12px; text-align: center; margin: 0 0 0 5px; letter-spacing: -.6px; overflow: hidden; flex: none; }
.tray { width: 61px; height: 17px; border: 1px solid; border-color: #888 #fff #fff #888; display: flex; align-items: center; padding-left: 2px; }
.cnt { font-size: 7.500px; line-height: 8px; border-bottom: 3px solid #2a9a3a; margin-left: 1px; width: 13px; }
.clock { margin-left: 5px; letter-spacing: -.3px; }

.dialog { position: absolute; left: 216px; top: 71px; width: 368px; height: 434px; background: #c1c1c1; border: 1px solid; border-color: #d8d8d8 #333 #333 #e8e8e8; border-right-width: 2px; border-bottom-width: 2px; box-shadow: inset 1px 1px #eee, inset -1px -1px #999; display: flex; flex-direction: column; padding: 2px 2px 0 3px; }
.dtitle { height: 14px; background: linear-gradient(90deg, #04048a, #1a88cc); color: #fff; font-weight: bold; font-size: 9px; line-height: 14px; letter-spacing: .2px; display: flex; justify-content: space-between; align-items: center; padding: 0 2px 0 0; }
.tabs { display: flex; margin-left: 5px; }
.t1 { margin-top: 8px; height: 14px; }
.t2 { height: 14px; }
.tabs span { text-align: center; height: 14px; line-height: 13px; font-size: 9px; border-top: 1px solid #f0f0f0; border-left: 1px solid #e8e8e8; border-right: 1px solid #333; letter-spacing: -.12px; }
.t2 span { border-bottom: 1px solid #f0f0f0; }
.t2 .sel { height: 16px; margin-top: -2px; line-height: 15px; background: #c1c1c1; border-bottom: 0; }
.panel { margin-left: 4px; width: 353px; height: 351px; border: 1px solid; border-color: transparent #333 #333 #eee; border-right-width: 2px; border-bottom-width: 2px; padding: 9px 0 0 11px; }
.group { border: 1px solid #eee; outline: 0; margin: 0; padding: 0; min-width: 0; border-top-color: #f0f0f0; border-left-color: #a4a4a4; box-shadow: inset 1px 0 #eee; }
.g1 { width: 169px; height: 104px; padding-left: 9px; }
.group legend { padding: 0 2px; line-height: 11px; background: #c1c1c1; }
.g1 > legend { margin-left: -6px; letter-spacing: -.05px; }
.check { display: flex; align-items: center; gap: 4px; height: 13px; }
.g1 > .check { margin-top: 6px; }
.cb { width: 10px; height: 10px; background: #fff; border: 1px solid; border-color: #555 #eee #eee #555; border-top-width: 2px; border-left-width: 2px; flex: none; }
.cb svg { display: block; width: 8px; height: 8px; margin: -.5px 0 0 -.5px; }
.focus { border: 1px solid #444; line-height: 11px; letter-spacing: -.25px; margin-left: -1px; }
.g2 { width: 142px; height: 57px; margin-top: 7px; padding-left: 6px; }
.g2 legend { letter-spacing: -.18px; margin-left: -3px; }
.g2 legend + .radio { margin-top: 1.500px; }
.radio { display: flex; align-items: center; height: 12.300px; gap: 4px; letter-spacing: -.1px; }
.rb { width: 9px; height: 9px; border-radius: 50%; background: #fff; border: 1px solid; border-color: #555 #eee #eee #555; display: flex; align-items: center; justify-content: center; }
.rb.on::before { content: ''; width: 3px; height: 3px; border-radius: 50%; background: #111; }
.k1 { margin: 6px 0 0 9px; } .k2 { margin: 1px 0 0 9px; }
.k1, .k2 { gap: 5px; letter-spacing: -.16px; }
.sumlbl { margin-top: 5px; letter-spacing: -.23px; }
.undef { width: 183px; height: 16px; margin-top: 3px; }
.undef b { letter-spacing: -.3px; }
.note { font: bold 21.300px/26.700px "Liberation Serif", "Times New Roman", serif; letter-spacing: .44px; text-align: center; margin: 3.500px 18px 0 -1px; color: #111; width: 324px; }
.btns { display: flex; gap: 4px; margin: 5px 0 0 108px; }
.btn { width: 59.500px; height: 18px; line-height: 15px; text-align: center; letter-spacing: -.1px; border: 1px solid; border-color: #f4f4f4 #444 #444 #f4f4f4; border-right-width: 2px; border-bottom-width: 2px; }
.btn.def { border-color: #222; border-width: 1px 2px 2px 1px; box-shadow: inset 1px 1px #eee; }
.btn.dis { color: #999; text-shadow: 1px 1px #f0f0f0; }

.mark { position: absolute; left: 607px; top: 537px; display: flex; opacity: .8; font: 24.800px/32px "Open Sans", sans-serif; color: #3c5446; }
.my { margin-left: 4px; color: #777; }
</style>
